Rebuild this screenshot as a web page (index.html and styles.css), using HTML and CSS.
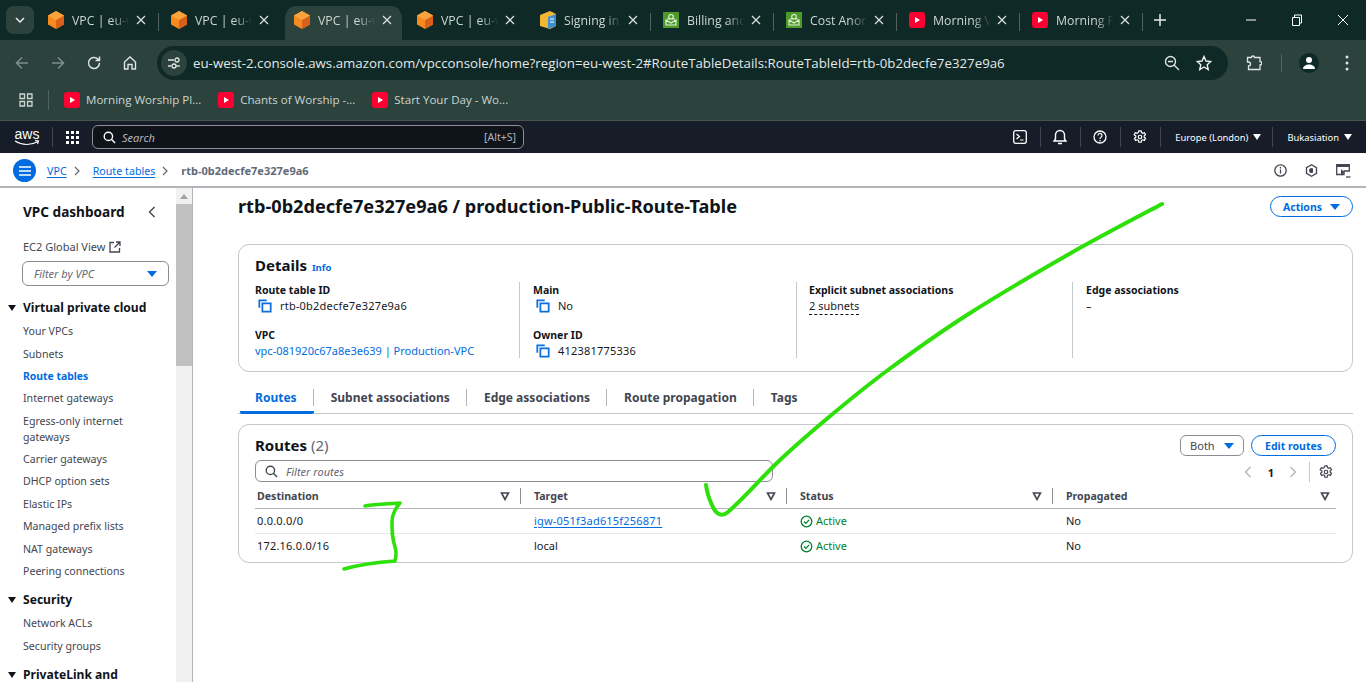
FILE: index.html
```html
<!DOCTYPE html>
<html lang="en">
<head>
	<meta charset="UTF-8">
	<meta name="viewport" content="width=device-width, initial-scale=1.0">
	<title>VPC | eu-west-2</title>
	<link rel="stylesheet" href="styles.css">
</head>
<body>
	<svg class="defs" width="0" height="0">
		<symbol id="cube" viewBox="0 0 16 18"><path d="M8 0l8 4.500v9L8 18 0 13.500v-9z" fill="#f58a1f"/><path d="M8 9l8-4.500v9L8 18z" fill="#d9601a"/><path d="M8 0l8 4.500L8 9 0 4.500z" fill="#f9a33c"/></symbol>
		<symbol id="yt" viewBox="0 0 16 16"><rect width="16" height="16" rx="3" fill="#ff0033"/><path d="M6 5l5 3-5 3z" fill="#fff"/></symbol>
		<symbol id="green" viewBox="0 0 16 16"><rect width="16" height="16" fill="#4d9a2a"/><path d="M8 2.500a2 2 0 0 1 0 4.500 2 2 0 0 1 0-4.500zM3 13V8l5 3 5-3v5zM4 7h8" fill="none" stroke="#e6f4dc" stroke-width="1.100"/></symbol>
		<symbol id="close" viewBox="0 0 10 10"><path d="M1 1l8 8M9 1l-8 8" stroke="#d8dfdc" stroke-width="1.300"/></symbol>
		<symbol id="copy" viewBox="0 0 16 16"><path d="M1.500 10V1.500H10M5 5h9.500v9.500H5z" fill="none" stroke="#0a6fdc" stroke-width="2"/></symbol>
		<symbol id="ok" viewBox="0 0 14 14"><circle cx="7" cy="7" r="5.700" fill="none" stroke="#00802f" stroke-width="1.400"/><path d="M4.300 7l2 2 3.500-3.800" fill="none" stroke="#00802f" stroke-width="1.400"/></symbol>
		<symbol id="sort" viewBox="0 0 10 10"><path d="M1.500 2h7L5 8.500z" fill="none" stroke="#424650" stroke-width="1.600"/></symbol>
		<symbol id="gear" viewBox="0 0 16 16"><path d="M6.700 1h2.600l.4 2 1.400.8 1.900-.7 1.300 2.300-1.500 1.300v1.600l1.500 1.300-1.300 2.300-1.900-.7-1.400.8-.4 2H6.700l-.4-2-1.400-.8-1.900.7-1.300-2.300 1.500-1.300V6.700L1.300 5.400l1.300-2.300 1.900.7 1.400-.8z" fill="none" stroke="currentColor" stroke-width="1.400"/><circle cx="8" cy="8" r="2" fill="none" stroke="currentColor" stroke-width="1.400"/></symbol>
		<symbol id="search" viewBox="0 0 14 14"><circle cx="5.800" cy="5.800" r="4.500" fill="none" stroke="currentColor" stroke-width="1.500"/><path d="M9 9l4 4" stroke="currentColor" stroke-width="1.500"/></symbol>
	</svg>

	<header class="tabstrip">
		<div class="tab-menu"><svg width="10" height="6" viewBox="0 0 10 6"><path d="M1 1l4 4 4-4" fill="none" stroke="#e6ebe9" stroke-width="1.500"/></svg></div>
		<div class="tab"><svg class="fav" viewBox="0 0 16 18"><use href="#cube"/></svg><span class="tab-title">VPC | eu-w</span><svg class="tab-x"><use href="#close"/></svg></div>
		<div class="tab no-sep"><svg class="fav" viewBox="0 0 16 18"><use href="#cube"/></svg><span class="tab-title">VPC | eu-w</span><svg class="tab-x"><use href="#close"/></svg></div>
		<div class="tab active"><svg class="fav" viewBox="0 0 16 18"><use href="#cube"/></svg><span class="tab-title">VPC | eu-w</span><svg class="tab-x"><use href="#close"/></svg></div>
		<div class="tab no-sep"><svg class="fav" viewBox="0 0 16 18"><use href="#cube"/></svg><span class="tab-title">VPC | eu-w</span><svg class="tab-x"><use href="#close"/></svg></div>
		<div class="tab"><svg class="fav" viewBox="0 0 16 18"><path d="M0 4l10-4 6 3v12l-6 3-10-3z" fill="#f3b733"/><path d="M8 6l8-3v12l-8 3z" fill="#3d8fd1"/><path d="M10 8h4M10 11h4" stroke="#fff"/></svg><span class="tab-title">Signing in</span><svg class="tab-x"><use href="#close"/></svg></div>
		<div class="tab"><svg class="fav" viewBox="0 0 16 16"><use href="#green"/></svg><span class="tab-title">Billing and</span><svg class="tab-x"><use href="#close"/></svg></div>
		<div class="tab"><svg class="fav" viewBox="0 0 16 16"><use href="#green"/></svg><span class="tab-title">Cost Anor</span><svg class="tab-x"><use href="#close"/></svg></div>
		<div class="tab"><svg class="fav" viewBox="0 0 16 16"><use href="#yt"/></svg><span class="tab-title">Morning V</span><svg class="tab-x"><use href="#close"/></svg></div>
		<div class="tab"><svg class="fav" viewBox="0 0 16 16"><use href="#yt"/></svg><span class="tab-title">Morning P</span><svg class="tab-x"><use href="#close"/></svg></div>
		<svg class="new-tab" width="12" height="12" viewBox="0 0 12 12"><path d="M6 0v12M0 6h12" stroke="#e6ebe9" stroke-width="1.500"/></svg>
		<div class="win-ctrls">
			<svg width="12" height="12" viewBox="0 0 12 12"><path d="M1 6h10" stroke="#fff"/></svg>
			<svg width="12" height="12" viewBox="0 0 12 12"><path d="M1.500 3.500h7v8h-7zM3.500 3.500V1h7v8H8.500" fill="none" stroke="#fff"/></svg>
			<svg width="12" height="12" viewBox="0 0 12 12"><path d="M1 1l10 10M11 1L1 11" stroke="#fff"/></svg>
		</div>
	</header>

	<div class="toolbar">
		<div class="nav-btns">
			<svg width="16" height="16" viewBox="0 0 16 16"><path d="M14 8H2.500M8 2.500L2.500 8 8 13.500" fill="none" stroke="#7f8f8b" stroke-width="1.500"/></svg>
			<svg width="16" height="16" viewBox="0 0 16 16"><path d="M2 8h11.500M8 2.500L13.500 8 8 13.500" fill="none" stroke="#7f8f8b" stroke-width="1.500"/></svg>
			<svg width="16" height="16" viewBox="0 0 16 16"><path d="M13.500 8a5.500 5.500 0 1 1-1.600-3.900L13.500 5.500M13.500 1.500v4h-4" fill="none" stroke="#dfe5e3" stroke-width="1.500"/></svg>
			<svg width="16" height="16" viewBox="0 0 16 16"><path d="M2.500 14V7L8 2l5.500 5v7H10V9.500H6V14z" fill="none" stroke="#dfe5e3" stroke-width="1.400"/></svg>
		</div>
		<div class="omnibox">
			<span class="site-info"><svg width="14" height="14" viewBox="0 0 14 14"><path d="M1 4h6M1 10h3" stroke="#dfe5e3" stroke-width="1.300"/><circle cx="10" cy="4" r="2" fill="none" stroke="#dfe5e3" stroke-width="1.300"/><circle cx="7" cy="10" r="2" fill="none" stroke="#dfe5e3" stroke-width="1.300"/><path d="M9 10h4" stroke="#dfe5e3" stroke-width="1.300"/></svg></span>
			<span class="url">eu-west-2.console.aws.amazon.com/vpcconsole/home?region=eu-west-2#RouteTableDetails:RouteTableId=rtb-0b2decfe7e327e9a6</span>
			<svg class="omni-zoom" width="16" height="16" viewBox="0 0 16 16"><circle cx="6.500" cy="6.500" r="5" fill="none" stroke="#dfe5e3" stroke-width="1.400"/><path d="M10 10l5 5M4 6.500h5" stroke="#dfe5e3" stroke-width="1.400"/></svg>
			<svg class="omni-star" width="16" height="16" viewBox="0 0 16 16"><path d="M8 1.500l2 4.500 4.800.5-3.600 3.200 1 4.800L8 12l-4.200 2.500 1-4.800L1.200 6.500 6 6z" fill="none" stroke="#eef2f0" stroke-width="1.400"/></svg>
		</div>
		<div class="browser-btns">
			<svg width="16" height="16" viewBox="0 0 16 16"><path d="M1.500 2.500h4a1.500 1.500 0 0 1 3 0h5.500v4a1.500 1.500 0 0 1 0 3.500V14.500H2.500V11a2 2 0 0 0 0-4H1.500z" fill="none" stroke="#dfe5e3" stroke-width="1.300"/></svg>
			<i class="tb-sep"></i>
			<span class="avatar"><svg width="14" height="14" viewBox="0 0 14 14"><circle cx="7" cy="4" r="3" fill="#fff"/><path d="M1 13c0-6 12-6 12 0z" fill="#fff"/></svg></span>
			<svg width="4" height="16" viewBox="0 0 4 16"><circle cx="2" cy="2" r="1.500" fill="#dfe5e3"/><circle cx="2" cy="8" r="1.500" fill="#dfe5e3"/><circle cx="2" cy="14" r="1.500" fill="#dfe5e3"/></svg>
		</div>
	</div>

	<div class="bookmarks">
		<svg class="apps" width="14" height="14" viewBox="0 0 14 14"><path d="M1 1h4.500v4.500H1zM8.500 1H13v4.500H8.500zM1 8.500h4.500V13H1zM8.500 8.500H13V13H8.500z" fill="none" stroke="#cfd7d4" stroke-width="1.300"/></svg>
		<i class="bm-sep"></i>
		<span class="bm"><svg width="16" height="16"><use href="#yt"/></svg>Morning Worship Pl...</span>
		<span class="bm"><svg width="16" height="16"><use href="#yt"/></svg>Chants of Worship -...</span>
		<span class="bm"><svg width="16" height="16"><use href="#yt"/></svg>Start Your Day - Wo...</span>
	</div>

	<nav class="aws-nav">
		<span class="aws-logo">aws<svg width="26" height="6" viewBox="0 0 26 6"><path d="M1 1c7 4.500 16 4.500 23 .5M21 .5l3.500.5-1 3" fill="none" stroke="#fff" stroke-width="1.100"/></svg></span>
		<i class="nav-sep"></i>
		<svg class="grid-ico" width="13" height="13" viewBox="0 0 13 13" fill="#fff"><path d="M0 0h3v3H0zM5 0h3v3H5zM10 0h3v3h-3zM0 5h3v3H0zM5 5h3v3H5zM10 5h3v3h-3zM0 10h3v3H0zM5 10h3v3H5zM10 10h3v3h-3z"/></svg>
		<div class="aws-search">
			<svg width="13" height="13" class="white"><use href="#search"/></svg>
			<em>Search</em>
			<span>[Alt+S]</span>
		</div>
		<div class="nav-right">
			<span class="nav-item"><svg width="14" height="14" viewBox="0 0 14 14"><rect x=".7" y=".7" width="12.600" height="12.600" rx="2" fill="none" stroke="#fff" stroke-width="1.300"/><path d="M3.500 4l3 2.500-3 2.500M7 10h3.500" fill="none" stroke="#fff" stroke-width="1.200"/></svg></span>
			<span class="nav-item"><svg width="14" height="16" viewBox="0 0 14 16"><path d="M1 12h12l-1.500-2V6a4.500 4.500 0 0 0-9 0v4zM5 14.500h4" fill="none" stroke="#fff" stroke-width="1.400"/></svg></span>
			<span class="nav-item"><svg width="14" height="14" viewBox="0 0 14 14"><circle cx="7" cy="7" r="6" fill="none" stroke="#fff" stroke-width="1.300"/><path d="M5 5.500a2 2 0 1 1 3 1.700c-.8.500-1 1-1 1.800M7 10v1.500" fill="none" stroke="#fff" stroke-width="1.200"/></svg></span>
			<span class="nav-item"><svg width="14" height="14" class="white"><use href="#gear"/></svg></span>
			<span class="nav-item region">Europe (London)<i class="caret light"></i></span>
			<span class="nav-item account">Bukasiation<i class="caret light"></i></span>
		</div>
	</nav>

	<div class="crumbs">
		<span class="burger"><svg width="12" height="10" viewBox="0 0 12 10"><path d="M0 1h12M0 5h12M0 9h12" stroke="#fff" stroke-width="1.500"/></svg></span>
		<a class="crumb-link">VPC</a>
		<svg class="chev" width="6" height="10" viewBox="0 0 6 10"><path d="M1 1l4 4-4 4" fill="none" stroke="#656871" stroke-width="1.200"/></svg>
		<a class="crumb-link">Route tables</a>
		<svg class="chev" width="6" height="10" viewBox="0 0 6 10"><path d="M1 1l4 4-4 4" fill="none" stroke="#656871" stroke-width="1.200"/></svg>
		<span class="crumb-now">rtb-0b2decfe7e327e9a6</span>
		<div class="crumb-icons">
			<svg width="13" height="13" viewBox="0 0 13 13"><circle cx="6.500" cy="6.500" r="5.700" fill="none" stroke="#424650" stroke-width="1.300"/><path d="M6.500 5.500v4M6.500 3v1.500" stroke="#424650" stroke-width="1.300"/></svg>
			<svg width="13" height="13" viewBox="0 0 13 13"><path d="M6.500 .8l5 2.800v5.800l-5 2.800-5-2.800V3.600z" fill="none" stroke="#424650" stroke-width="1.300"/><path d="M8 4.500a2.500 2.500 0 1 0 0 4z" fill="#424650"/></svg>
			<svg width="15" height="14" viewBox="0 0 15 14"><path d="M.7.700h12.600v6.300H8v3.500H.7z" fill="none" stroke="#424650" stroke-width="1.300"/><path d="M.7 .7h12.600V3H.7zM5 5l3.500 3.500-3.500 3z" fill="#424650"/><path d="M10 13h4.500" stroke="#424650" stroke-width="1.300"/></svg>
		</div>
	</div>

	<div class="console">
		<aside class="sidebar">
			<div class="side-head"><h2>VPC dashboard</h2><svg width="8" height="12" viewBox="0 0 8 12"><path d="M6.500 1L1.500 6l5 5" fill="none" stroke="#424650" stroke-width="1.400"/></svg></div>
			<div class="side-link">EC2 Global View <svg width="12" height="12" viewBox="0 0 12 12"><path d="M5 1.500H1v9.500h9.500V7M7 1h4v4M11 1L5.500 6.500" fill="none" stroke="#424650" stroke-width="1.300"/></svg></div>
			<div class="side-filter"><em>Filter by VPC</em><i class="caret"></i></div>
			<h3 class="side-group">Virtual private cloud</h3>
			<ul class="side-list">
				<li>Your VPCs</li>
				<li>Subnets</li>
				<li class="current">Route tables</li>
				<li>Internet gateways</li>
				<li>Egress-only internet gateways</li>
				<li>Carrier gateways</li>
				<li>DHCP option sets</li>
				<li>Elastic IPs</li>
				<li>Managed prefix lists</li>
				<li>NAT gateways</li>
				<li>Peering connections</li>
			</ul>
			<h3 class="side-group">Security</h3>
			<ul class="side-list">
				<li>Network ACLs</li>
				<li>Security groups</li>
			</ul>
			<h3 class="side-group">PrivateLink and</h3>
		</aside>
		<div class="scrollbar"><span class="sb-arrow"></span><span class="sb-thumb"></span></div>

		<main class="content">
			<div class="page-head">
				<h1>rtb-0b2decfe7e327e9a6 / production-Public-Route-Table</h1>
				<button class="btn">Actions <i class="caret"></i></button>
			</div>

			<section class="card details">
				<h2>Details <a class="info">Info</a></h2>
				<div class="detail-grid">
					<div class="detail-col">
						<dl><dt>Route table ID</dt><dd><svg class="copy"><use href="#copy"/></svg><span class="num">rtb-0b2decfe7e327e9a6</span></dd></dl>
						<dl><dt>VPC</dt><dd class="link">vpc-081920c67a8e3e639 | Production-VPC</dd></dl>
					</div>
					<div class="detail-col">
						<dl><dt>Main</dt><dd><svg class="copy"><use href="#copy"/></svg>No</dd></dl>
						<dl><dt>Owner ID</dt><dd><svg class="copy"><use href="#copy"/></svg><span class="num">412381775336</span></dd></dl>
					</div>
					<div class="detail-col">
						<dl><dt>Explicit subnet associations</dt><dd><span class="dashed">2 subnets</span></dd></dl>
					</div>
					<div class="detail-col">
						<dl><dt>Edge associations</dt><dd>–</dd></dl>
					</div>
				</div>
			</section>

			<div class="tabs">
				<span class="tabs-item on">Routes</span>
				<span class="tabs-item">Subnet associations</span>
				<span class="tabs-item">Edge associations</span>
				<span class="tabs-item">Route propagation</span>
				<span class="tabs-item">Tags</span>
			</div>

			<section class="card routes">
				<div class="routes-head">
					<h2>Routes <span>(2)</span></h2>
					<div class="routes-actions">
						<span class="select">Both <i class="caret"></i></span>
						<button class="btn">Edit routes</button>
					</div>
				</div>
				<div class="routes-tools">
					<div class="filter"><svg width="13" height="13" class="grey"><use href="#search"/></svg><em>Filter routes</em></div>
					<div class="pager">
						<svg width="8" height="12" viewBox="0 0 8 12"><path d="M6.500 1L1.500 6l5 5" fill="none" stroke="#b4b4bb" stroke-width="1.400"/></svg>
						<b>1</b>
						<svg width="8" height="12" viewBox="0 0 8 12"><path d="M1.500 1l5 5-5 5" fill="none" stroke="#b4b4bb" stroke-width="1.400"/></svg>
						<i class="pager-sep"></i>
						<svg width="14" height="14" class="grey"><use href="#gear"/></svg>
					</div>
				</div>
				<table class="routes-table">
					<thead>
						<tr>
							<th><div>Destination<svg><use href="#sort"/></svg></div></th>
							<th><div>Target<svg><use href="#sort"/></svg></div></th>
							<th><div>Status<svg><use href="#sort"/></svg></div></th>
							<th><div class="last">Propagated<svg><use href="#sort"/></svg></div></th>
						</tr>
					</thead>
					<tbody>
						<tr>
							<td><span class="num">0.0.0.0/0</span></td>
							<td class="pad"><a class="crumb-link num">igw-051f3ad615f256871</a></td>
							<td class="pad active"><svg><use href="#ok"/></svg>Active</td>
							<td class="pad">No</td>
						</tr>
						<tr>
							<td><span class="num">172.16.0.0/16</span></td>
							<td class="pad">local</td>
							<td class="pad active"><svg><use href="#ok"/></svg>Active</td>
							<td class="pad">No</td>
						</tr>
					</tbody>
				</table>
			</section>
		</main>
	</div>

	<!-- freehand marks drawn on top of the screenshot -->
	<svg class="scribble" width="1366" height="682" viewBox="0 0 1366 682">
		<path class="thick" d="M1162 204C1147 212 1103.500 234.500 1071 253C1038.500 271.500 997.500 295.500 967 315C936.500 334.500 911 353 888 370C865 387 847 402 829 417C811 432 796.800 444.200 780 460C763 476 745 497 728 512C722 517 716 515 712 505C709 499 707 492 706 485"/>
		<path d="M365 506C376 504 388 504 400 503C394 510 392 515 392 522C392 532 392 538 395 547C397 553 396 557 395 561C380 562 362 564 344 569"/>
	</svg>
</body>
</html>
```

FILE: styles.css
```css
* {
	box-sizing: border-box;
}
html,
body {
	margin: 0;
	height: 682px;
	overflow: hidden;
	background: #fff;
	font: 11px 'Noto Sans', sans-serif;
	color: #16191f;
}
body {
	display: flex;
	flex-direction: column;
	position: relative;
}
.defs {
	position: absolute;
}
h1, h2, h3, dl, dd, ul {
	margin: 0;
	padding: 0;
}
i, em {
	display: block;
}
svg {
	flex: none;
	display: block;
}

/* browser chrome */
.tabstrip {
	height: 40px;
	background: #0e2926;
	display: flex;
	align-items: flex-end;
	padding-left: 6px;
	font-family: 'Open Sans', sans-serif;
}
.tab-menu {
	width: 28px;
	height: 28px;
	margin: 0 2px 6px 0;
	border-radius: 8px;
	background: #2b423d;
	display: flex;
	align-items: center;
	justify-content: center;
}
.tab {
	width: 123px;
	height: 34px;
	padding: 0 13px 6px 12px;
	display: flex;
	align-items: center;
	position: relative;
	color: #cdd6d3;
	font-size: 12.300px;
}
.tab:after {
	content: '';
	position: absolute;
	right: 0;
	top: 7px;
	height: 18px;
	border-right: 1px solid #50635f;
}
.tab.no-sep:after,
.tab.active:after {
	display: none;
}
.tab.active {
	background: #2b423d;
	background-clip: padding-box;
	border: solid transparent;
	border-width: 0 3px;
	border-radius: 13px 13px 0 0;
	padding: 0 10px 6px 9px;
}
.fav {
	width: 16px;
	height: 18px;
	margin-right: 8px;
}
.tab-title {
	flex: 1;
	white-space: nowrap;
	-webkit-mask-image: linear-gradient(90deg, #000 62%, transparent 90%);
	mask-image: linear-gradient(90deg, #000 62%, transparent 90%);
}
.tab-x {
	width: 10px;
	height: 10px;
}
.new-tab {
	margin: 0 0 14px 11px;
}
.win-ctrls {
	margin-left: auto;
	height: 40px;
	display: flex;
	align-items: center;
	gap: 34px;
	padding-right: 17px;
}

.toolbar {
	height: 46px;
	background: #2b423d;
	display: flex;
	align-items: center;
	color: #dfe5e3;
	font-family: 'Open Sans', sans-serif;
}
.nav-btns {
	display: flex;
	gap: 20px;
	padding: 0 6px 0 14px;
}
.omnibox {
	width: 1071px;
	height: 34px;
	margin-left: 13px;
	border-radius: 17px;
	background: #0e2926;
	display: flex;
	align-items: center;
	padding: 0 16px 0 4px;
}
.site-info {
	width: 26px;
	height: 26px;
	border-radius: 50%;
	background: #2b423d;
	display: flex;
	align-items: center;
	justify-content: center;
}
.url {
	margin-left: 6px;
	font-size: 13.290px;
	white-space: nowrap;
	color: #e2e8e6;
}
.omni-zoom {
	margin-left: auto;
}
.omni-star {
	margin-left: 16px;
}
.browser-btns {
	display: flex;
	align-items: center;
	margin-left: 18px;
}
.tb-sep {
	width: 1px;
	height: 18px;
	background: #50635f;
	margin: 0 9px 0 19px;
}
.avatar {
	width: 20px;
	height: 20px;
	border-radius: 50%;
	background: #0e2926;
	display: flex;
	align-items: center;
	justify-content: center;
	margin: 0 26px 0 8px;
}

.bookmarks {
	height: 34px;
	background: #2b423d;
	display: flex;
	align-items: center;
	padding: 0 0 7px 19px;
	color: #cdd6d3;
	font: 11.550px 'Open Sans', sans-serif;
}
.bm-sep {
	width: 1px;
	height: 20px;
	background: #50635f;
	margin: 0 15px;
}
.bm {
	display: flex;
	align-items: center;
	gap: 6px;
	margin-right: 17px;
	white-space: nowrap;
}

/* aws console bar */
.aws-nav {
	height: 33px;
	background: #161d29;
	border-top: 1px solid #47544f;
	display: flex;
	align-items: center;
	color: #fff;
	padding-left: 14px;
}
.aws-logo {
	width: 26px;
	font: 14px/11px 'Liberation Sans', sans-serif;
	text-align: center;
}
.nav-sep {
	width: 1px;
	height: 20px;
	background: #424650;
	margin: 0 13px 0 12px;
}
.aws-search {
	width: 432px;
	height: 24px;
	margin-left: 13px;
	padding: 0 7px 0 10px;
	border: 1px solid #8c8c94;
	border-radius: 6px;
	background: #0f141a;
	display: flex;
	align-items: center;
	gap: 6px;
	color: #b4b4bb;
}
.aws-search span {
	margin-left: auto;
	font-size: 10.500px;
}
.white {
	color: #fff;
}
.nav-right {
	margin-left: auto;
	display: flex;
	align-items: center;
	height: 100%;
	padding-right: 1px;
}
.nav-item {
	height: 20px;
	padding: 0 13px 0 12px;
	border-left: 1px solid #424650;
	display: flex;
	align-items: center;
	white-space: nowrap;
	font-size: 9.400px;
}
.nav-item:first-child {
	border-left: 0;
}
.region,
.account {
	padding-left: 14px;
}
.region {
	padding-right: 11px;
}
.caret.light {
	border-top-color: #fff;
	border-width: 6px 4px 0;
	margin-left: 5px;
}

.crumbs {
	height: 35px;
	display: flex;
	align-items: center;
	padding: 2px 15px 0 13px;
	border-bottom: 2px solid #b4b4bb;
	flex: none;
	font-size: 10.700px;
}
.burger {
	width: 23px;
	height: 23px;
	border-radius: 50%;
	background: #006ce0;
	display: flex;
	align-items: center;
	justify-content: center;
	margin-right: 11px;
}
.crumb-link {
	color: #006ce0;
	text-decoration: underline;
	text-underline-offset: 2px;
}
.chev {
	margin: 0 13px 0 7px;
}
.crumb-now {
	font-weight: 700;
	color: #5f6b7a;
	font-size: 11px;
}
.crumb-icons {
	margin-left: auto;
	display: flex;
	gap: 18px;
	align-items: center;
}

/* sidebar */
.console {
	flex: 1;
	display: flex;
	min-height: 0;
}
.sidebar {
	width: 176px;
	padding: 15px 0 0 8px;
	overflow: hidden;
	color: #424650;
	flex: none;
	font-size: 10.600px;
}
.side-head {
	display: flex;
	justify-content: space-between;
	align-items: center;
	padding: 0 20px 0 15px;
}
.side-head h2 {
	font-size: 13.600px;
	line-height: 18px;
	color: #0f141a;
}
.side-link {
	display: flex;
	gap: 4px;
	align-items: center;
	margin: 18px 0 0 15px;
	line-height: 16px;
	font-size: 11px;
}
.side-filter {
	width: 147px;
	height: 25px;
	margin: 6px 0 0 14px;
	padding: 0 11px;
	border: 1px solid #8c8c94;
	border-radius: 6px;
	display: flex;
	align-items: center;
	justify-content: space-between;
	color: #656871;
	font-size: 11px;
}
.caret {
	width: 0;
	height: 0;
	border: 5px solid transparent;
	border-top: 6px solid #006ce0;
	border-bottom: 0;
}
.side-group {
	font-size: 12.100px;
	line-height: 18px;
	color: #0f141a;
	padding-left: 15px;
	position: relative;
}
.side-group:before {
	content: '';
	position: absolute;
	left: 0;
	top: 6px;
	border: 4px solid transparent;
	border-top: 6px solid #0f141a;
	border-bottom: 0;
}
.side-filter + .side-group {
	margin-top: 13px;
}
.side-list {
	list-style: none;
	padding: 3px 20px 9px 15px;
}
.side-list li {
	padding: 3.200px 0;
	line-height: 16px;
}
.side-list .current {
	color: #006ce0;
	font-weight: 700;
	font-size: 10.400px;
}
.scrollbar {
	width: 16px;
	background: #f1f1f1;
	flex: none;
}
.sb-arrow {
	display: block;
	width: 0;
	margin: 6px auto 5px;
	border: 4px solid transparent;
	border-top: 0;
	border-bottom: 5px solid #a3a3a3;
}
.sb-thumb {
	display: block;
	height: 162px;
	background: #c1c1c1;
}

/* main content */
.content {
	flex: 1;
	padding: 0 13px 0 45px;
	border-left: 1px solid #b4b4bb;
	min-width: 0;
}
.page-head {
	height: 56px;
	display: flex;
	justify-content: space-between;
	align-items: flex-start;
	padding-top: 8px;
}
.page-head h1 {
	font-size: 18.150px;
	line-height: 20px;
	color: #0f141a;
}
.btn {
	height: 21px;
	padding: 0 12px;
	border: 1.300px solid #006ce0;
	border-radius: 11px;
	background: #fff;
	color: #006ce0;
	font: 700 10.500px 'Noto Sans', sans-serif;
	display: flex;
	align-items: center;
	gap: 8px;
}
.routes-actions .btn {
	padding: 0 13px;
}
.card {
	border: 1px solid #c6c6cd;
	border-radius: 11px;
}
.details {
	height: 128px;
	padding: 10px 16px 0;
}
.details h2 {
	font-size: 15px;
	line-height: 20px;
	color: #0f141a;
	display: flex;
	align-items: baseline;
	gap: 5px;
}
.info {
	font-size: 9.500px;
	color: #006ce0;
}
.detail-grid {
	display: grid;
	grid-template-columns: 264px 277px 276px 277px;
	margin-top: 4px;
}
.detail-col {
	height: 76px;
	padding-left: 13px;
	border-left: 1px solid #c6c6cd;
}
.detail-col:first-child {
	padding-left: 0;
	border-left: 0;
}
.detail-col:nth-child(3) {
	padding-left: 12px;
}
.detail-col dl {
	height: 45px;
}
.detail-col dt {
	font-weight: 700;
	font-size: 10.500px;
	line-height: 16px;
	color: #0f141a;
}
.detail-col dd {
	display: flex;
	align-items: center;
	line-height: 16px;
}
.detail-col .link {
	color: #006ce0;
}
.copy {
	width: 14px;
	height: 14px;
	margin: 0 8px 0 3px;
}
.num {
	letter-spacing: .2px;
}
.dashed {
	border-bottom: 1px dashed #0f141a;
}

.tabs {
	height: 42px;
	padding: 13px 0 0 2px;
	display: flex;
	align-items: flex-start;
	border-bottom: 1px solid #c6c6cd;
	margin-bottom: 10px;
}
.tabs-item {
	height: 29px;
	line-height: 26px;
	padding: 0 17px;
	font-size: 12.030px;
	font-weight: 700;
	color: #424650;
	position: relative;
}
.tabs-item:not(:last-child):after {
	content: '';
	position: absolute;
	right: 0;
	top: 4px;
	height: 17px;
	border-right: 1px solid #b4b4bb;
}
.tabs-item.on {
	color: #006ce0;
	border-bottom: 3px solid #006ce0;
	border-radius: 2px;
	padding: 0 17px 0 15px;
}

.routes {
	height: 139px;
	padding: 10px 16px 0;
}
.routes-head {
	display: flex;
	justify-content: space-between;
}
.routes-head h2 {
	font-size: 15px;
	line-height: 20px;
	color: #0f141a;
}
.routes-head h2 span {
	font-weight: 400;
	color: #656871;
}
.routes-actions {
	display: flex;
	gap: 7px;
	height: 22px;
}
.select {
	width: 64px;
	height: 21px;
	padding: 0 9px;
	border: 1px solid #8c8c94;
	border-radius: 6px;
	display: flex;
	align-items: center;
	justify-content: space-between;
	color: #424650;
}
.routes-tools {
	height: 25px;
	margin-top: 3px;
	display: flex;
	justify-content: space-between;
}
.filter {
	width: 518px;
	height: 22px;
	padding: 0 9px;
	border: 1px solid #8c8c94;
	border-radius: 6px;
	display: flex;
	align-items: center;
	gap: 8px;
	color: #656871;
}
.grey {
	color: #424650;
}
.pager {
	display: flex;
	align-items: center;
	height: 22px;
	margin-top: 1px;
	padding-right: 3px;
}
.pager b {
	margin: 0 15px 0 16px;
}
.pager-sep {
	width: 1px;
	height: 20px;
	background: #c6c6cd;
	margin: 0 9px 0 12px;
}

.routes-table {
	width: 100%;
	border-collapse: collapse;
	table-layout: fixed;
}
.routes-table th {
	padding: 3px 0 4px;
	border-bottom: 1px solid #b4b4bb;
	text-align: left;
	font-weight: 700;
	font-size: 10.600px;
	color: #424650;
}
.routes-table th:first-child {
	width: 265px;
}
.routes-table th:nth-child(2),
.routes-table th:nth-child(3) {
	width: 266px;
}
.routes-table th div {
	height: 16px;
	line-height: 16px;
	display: flex;
	align-items: center;
	justify-content: space-between;
	margin-right: -1px;
	padding: 0 10px 0 2px;
	border-right: 1px solid #8c8c94;
}
.routes-table th + th div {
	padding-left: 14px;
}
.routes-table th div.last {
	border-right: 0;
	margin-right: 0;
	padding-right: 6px;
}
.routes-table th svg {
	width: 10px;
	height: 10px;
}
.routes-table td {
	height: 25px;
	padding: 0 0 2px 2px;
	border-bottom: 1px solid #e8e8ec;
}
.routes-table tr:last-child td {
	border-bottom: 0;
}
.routes-table td.pad {
	padding-left: 14px;
}
.routes-table td.active {
	color: #00802f;
}
.routes-table td.active svg {
	display: inline-block;
	width: 13px;
	height: 13px;
	margin-right: 3px;
	vertical-align: -3px;
}

.scribble {
	position: absolute;
	left: 0;
	top: 0;
	pointer-events: none;
}
.scribble path {
	fill: none;
	stroke: #2ee00a;
	stroke-width: 3.500;
	stroke-linecap: round;
	stroke-linejoin: round;
}
.scribble .thick {
	stroke-width: 4;
}
```
